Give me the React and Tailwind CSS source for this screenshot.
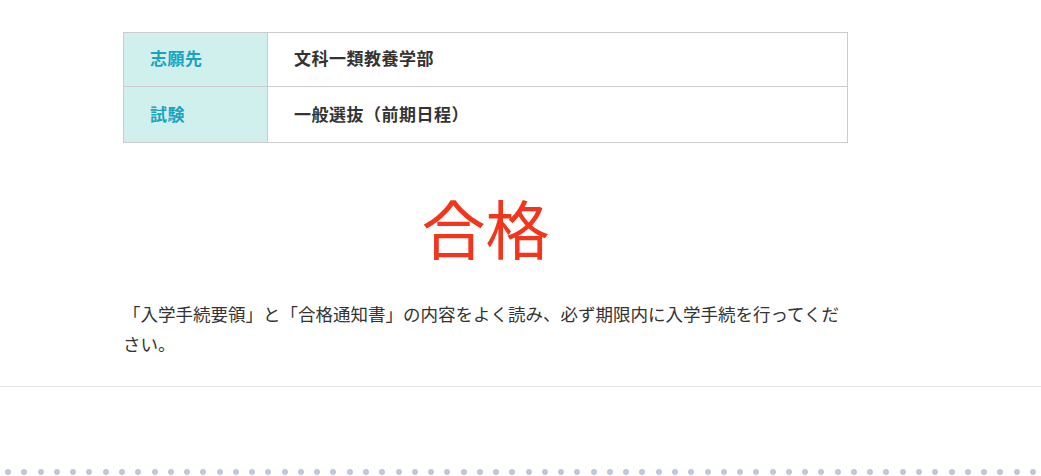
export default function App() {
  const dots = Array.from({ length: 64 });
  return (
    <div className="w-full bg-white font-['Noto_Sans_CJK_JP','Noto_Sans',sans-serif] text-[#333]">
      <div className="ml-[123px] w-[725px] pt-[32px]">
        <div className="border border-[#cccccc]">
          <div className="flex h-[54px] border-b border-[#cccccc]">
            <div className="flex w-[144px] items-center border-r border-[#cccccc] bg-[#d0f0ee] pb-[3px] pl-[26px] text-[17px] font-bold tracking-[0.5px] text-[#1aa3bf]">
              志願先
            </div>
            <div className="flex flex-1 items-center pb-[3px] pl-[26px] text-[17px] font-bold tracking-[0.5px] text-[#333]">
              文科一類教養学部
            </div>
          </div>
          <div className="flex h-[55px]">
            <div className="flex w-[144px] items-center border-r border-[#cccccc] bg-[#d0f0ee] pb-[2px] pl-[26px] text-[17px] font-bold tracking-[0.5px] text-[#1aa3bf]">
              試験
            </div>
            <div className="flex flex-1 items-center pb-[2px] pl-[26px] text-[17px] font-bold tracking-[0.5px] text-[#333]">
              一般選抜（前期日程）
            </div>
          </div>
        </div>
        <div className="mt-[51px] text-center text-[64px] leading-[64px] text-[#f2361d]">
          合格
        </div>
        <p className="mt-[41px] text-[17.5px] leading-[30px] text-[#333]">
          「入学手続要領」と「合格通知書」の内容をよく読み、必ず期限内に入学手続を行ってください。
        </p>
      </div>
      <div className="mt-[27px] h-px w-full bg-[#e3e3e3]" />
      <div className="mt-[77px] flex h-[16px] w-full">
        {dots.map((_, i) => (
          <div key={i} className="flex flex-1 items-center justify-center">
            <div className="h-[6px] w-[6px] rounded-full bg-[#c0c7d5]" />
          </div>
        ))}
      </div>
    </div>
  );
}
